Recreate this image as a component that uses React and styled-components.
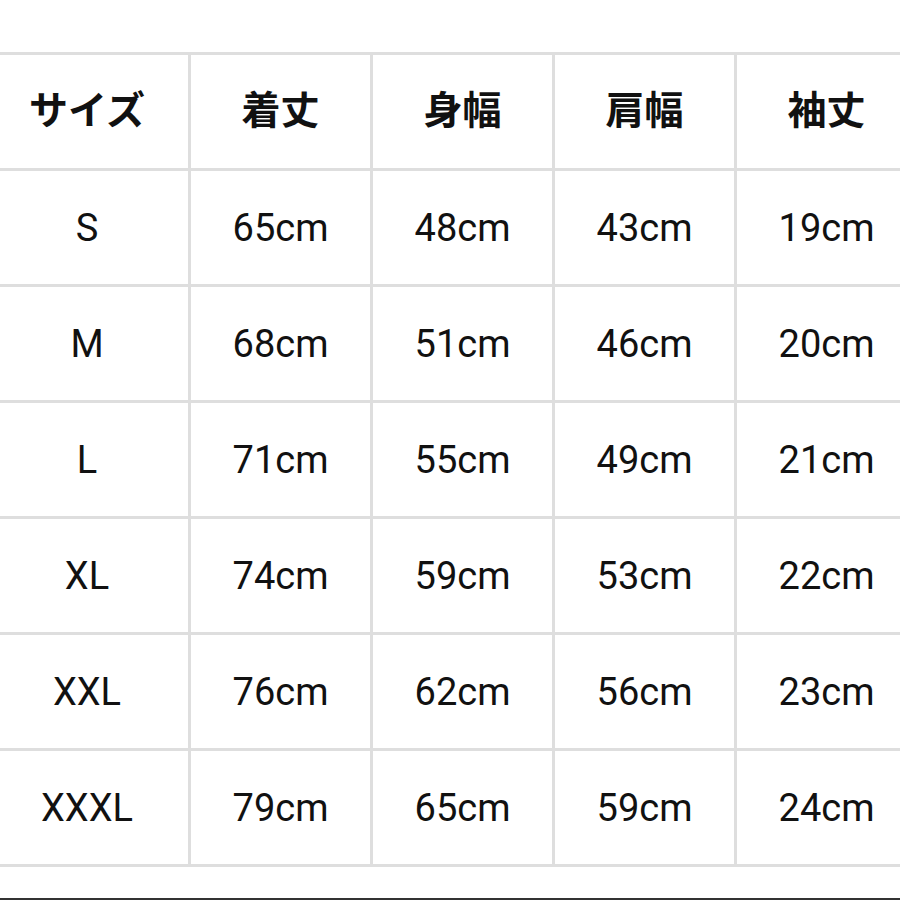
import React from "react";
import styled, { createGlobalStyle } from "styled-components";

const GlobalStyle = createGlobalStyle`
  html, body {
    margin: 0;
    padding: 0;
    background: #ffffff;
    overflow: hidden;
  }
  body {
    font-family: Roboto, "Noto Sans CJK JP", sans-serif;
  }
`;

const headers = ["サイズ", "着丈", "身幅", "肩幅", "袖丈"];

const rows = [
  ["S", "65cm", "48cm", "43cm", "19cm"],
  ["M", "68cm", "51cm", "46cm", "20cm"],
  ["L", "71cm", "55cm", "49cm", "21cm"],
  ["XL", "74cm", "59cm", "53cm", "22cm"],
  ["XXL", "76cm", "62cm", "56cm", "23cm"],
  ["XXXL", "79cm", "65cm", "59cm", "24cm"],
];

const Page = styled.div`
  width: 900px;
  height: 900px;
  display: flex;
  flex-direction: column;
  overflow: hidden;
`;

const Grid = styled.div`
  margin-top: 52px;
  margin-left: -14px;
  width: 950px;
  display: grid;
  grid-template-columns: 202px repeat(4, 179px);
  grid-auto-rows: 113px;
  gap: 3px;
  padding: 3px 0;
  background: #dedede;
`;

const Cell = styled.div`
  background: #ffffff;
  display: flex;
  align-items: center;
  justify-content: center;
  color: #111111;
  font-family: ${(p) =>
    p.$head
      ? '"Noto Sans CJK JP", sans-serif'
      : 'Roboto, "Noto Sans CJK JP", sans-serif'};
  font-weight: ${(p) => (p.$head ? 700 : 400)};
  font-size: ${(p) => (p.$head ? "39px" : "38px")};
  padding-bottom: ${(p) => (p.$head ? "9px" : "0")};
`;

const Spacer = styled.div`
  flex: 1;
`;

const BottomRule = styled.div`
  height: 2px;
  background: #333333;
`;

export default function App() {
  return (
    <>
      <GlobalStyle />
      <Page>
        <Grid>
          {headers.map((h) => (
            <Cell key={h} $head>
              {h}
            </Cell>
          ))}
          {rows.map((r) =>
            r.map((v, i) => <Cell key={r[0] + i}>{v}</Cell>)
          )}
        </Grid>
        <Spacer />
        <BottomRule />
      </Page>
    </>
  );
}
